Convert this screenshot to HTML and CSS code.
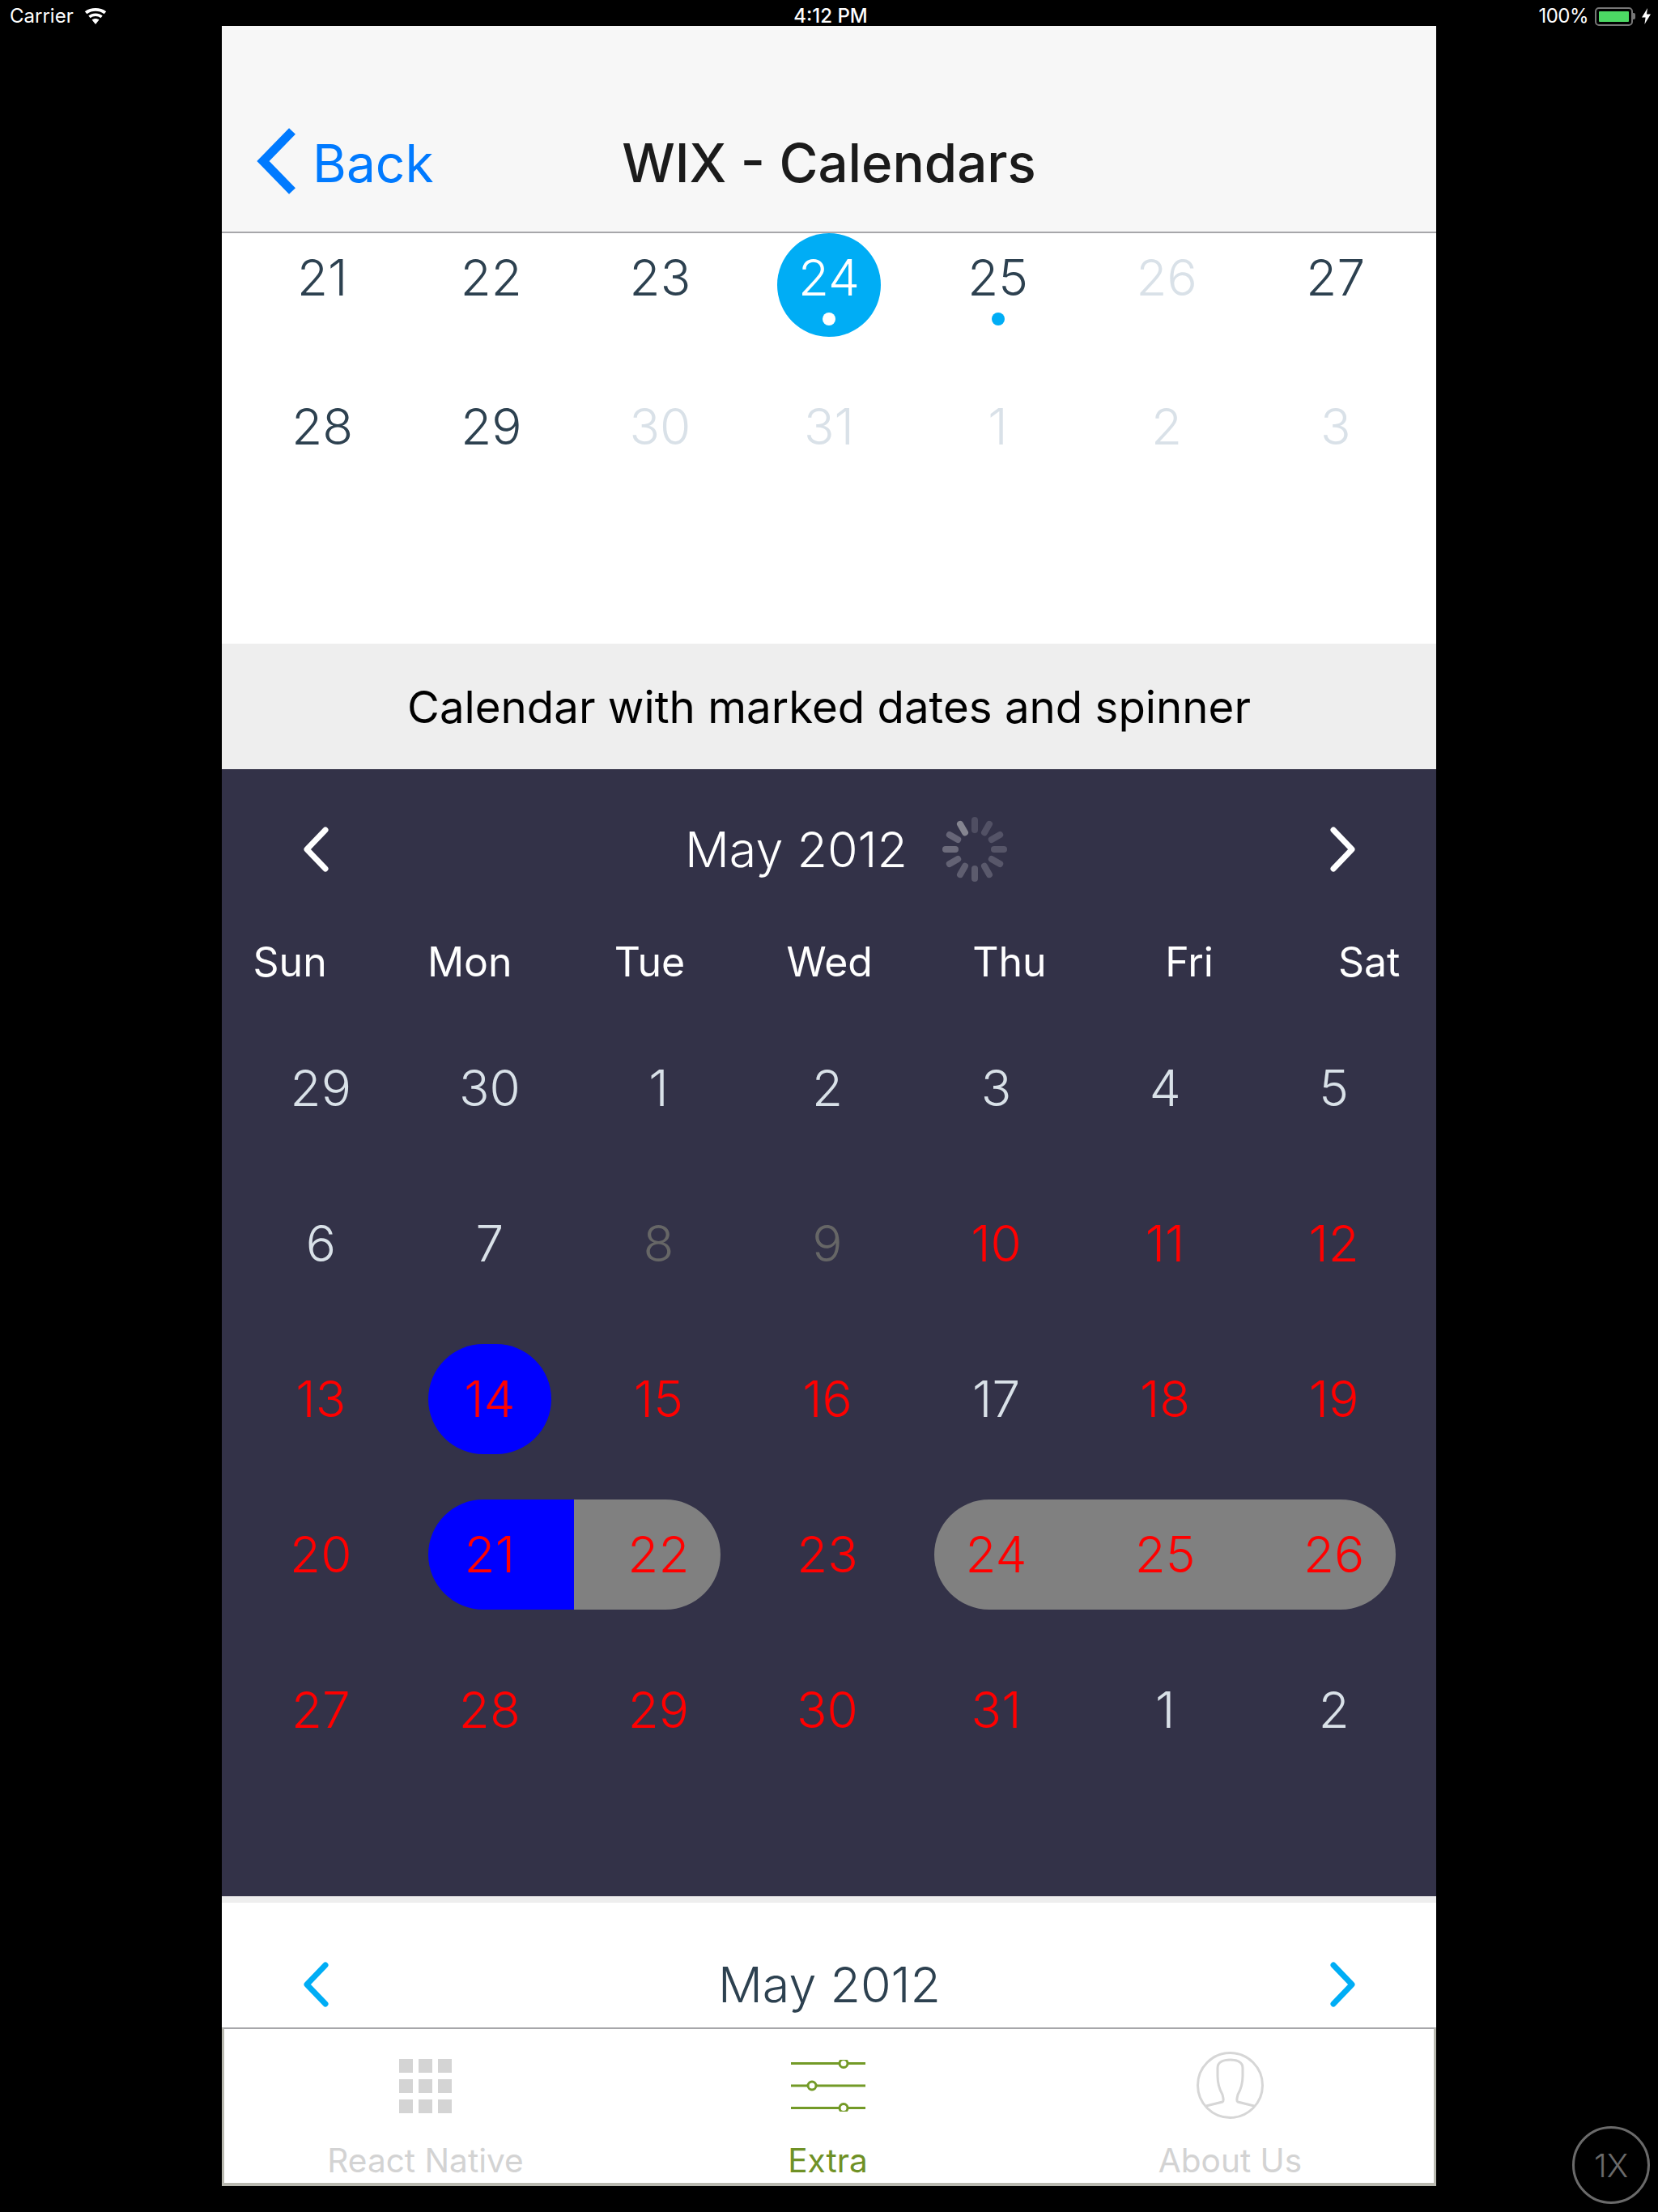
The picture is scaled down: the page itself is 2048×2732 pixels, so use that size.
FILE: index.html
```html
<!DOCTYPE html>
<html>
	<head>
		<meta charset="utf-8">
		<title>WIX - Calendars</title>
		<link rel="stylesheet" href="styles.css">
	</head>
	<body>
		<div class="statusbar">
			<div class="status-left">
				<span>Carrier</span>
				<svg class="wifi" viewBox="0 0 30 20" width="30" height="20">
					<path d="M15 20 L10.6 14.6 C13 12.6 17 12.6 19.4 14.6 Z" fill="#fff"/>
					<path d="M8.6 12.2 L6.3 9.5 C11 5.6 19 5.6 23.7 9.5 L21.4 12.2 C17.6 9.2 12.4 9.2 8.6 12.2 Z" fill="#fff"/>
					<path d="M4.4 7.2 L1.8 4.2 C9 -1.4 21 -1.4 28.2 4.2 L25.6 7.2 C19.6 2.6 10.4 2.6 4.4 7.2 Z" fill="#fff"/>
				</svg>
			</div>
			<div class="status-time">4:12 PM</div>
			<div class="status-right">
				<span>100%</span>
				<div class="battery"><div class="battery-level"></div></div>
				<div class="battery-tip"></div>
				<svg class="bolt" viewBox="0 0 13 20" width="13" height="20">
					<path d="M8 0 L1 11.5 L5.6 11.5 L4.4 20 L12 7.6 L7 7.6 Z" fill="#fff"/>
				</svg>
			</div>
		</div>

		<div class="app">
			<div class="navbar">
				<div class="nav-back">
					<svg viewBox="0 0 52 84" width="52" height="84">
						<path d="M46 5 L10 42 L46 79" fill="none" stroke="#007aff" stroke-width="11"/>
					</svg>
					<span>Back</span>
				</div>
				<div class="nav-title">WIX - Calendars</div>
			</div>

			<div class="calendar-top">
				<div class="week week-top">
					<div class="day"><span class="num">21</span></div>
					<div class="day"><span class="num">22</span></div>
					<div class="day"><span class="num">23</span></div>
					<div class="day">
						<div class="selected"><span class="num white">24</span><span class="dot dot-white"></span></div>
					</div>
					<div class="day"><span class="num">25</span><span class="dot"></span></div>
					<div class="day"><span class="num pale">26</span></div>
					<div class="day"><span class="num">27</span></div>
				</div>
				<div class="week week-top">
					<div class="day"><span class="num">28</span></div>
					<div class="day"><span class="num">29</span></div>
					<div class="day"><span class="num pale">30</span></div>
					<div class="day"><span class="num pale">31</span></div>
					<div class="day"><span class="num pale">1</span></div>
					<div class="day"><span class="num pale">2</span></div>
					<div class="day"><span class="num pale">3</span></div>
				</div>
			</div>

			<div class="section-title">Calendar with marked dates and spinner</div>

			<div class="calendar-dark">
				<div class="month-header">
					<svg class="arrow" viewBox="0 0 36 56" width="36" height="56">
						<path d="M30 4 L7 28 L30 52" fill="none" stroke="#fff" stroke-width="7" stroke-linecap="round" stroke-linejoin="round"/>
					</svg>
					<div class="month-mid">
						<span class="month-name">May 2012</span>
						<svg class="spinner" viewBox="-41 -41 82 82" width="82" height="82">
							<g stroke-width="8" stroke-linecap="round">
								<line x1="0" y1="-36" x2="0" y2="-24" stroke="#4f4e62"/>
								<line x1="0" y1="-36" x2="0" y2="-24" stroke="#525165" transform="rotate(30)"/>
								<line x1="0" y1="-36" x2="0" y2="-24" stroke="#545367" transform="rotate(60)"/>
								<line x1="0" y1="-36" x2="0" y2="-24" stroke="#565568" transform="rotate(90)"/>
								<line x1="0" y1="-36" x2="0" y2="-24" stroke="#58576a" transform="rotate(120)"/>
								<line x1="0" y1="-36" x2="0" y2="-24" stroke="#5a596c" transform="rotate(150)"/>
								<line x1="0" y1="-36" x2="0" y2="-24" stroke="#5c5b6d" transform="rotate(180)"/>
								<line x1="0" y1="-36" x2="0" y2="-24" stroke="#5f5e70" transform="rotate(210)"/>
								<line x1="0" y1="-36" x2="0" y2="-24" stroke="#636274" transform="rotate(240)"/>
								<line x1="0" y1="-36" x2="0" y2="-24" stroke="#6c6b7b" transform="rotate(270)"/>
								<line x1="0" y1="-36" x2="0" y2="-24" stroke="#666577" transform="rotate(300)"/>
								<line x1="0" y1="-36" x2="0" y2="-24" stroke="#858590" transform="rotate(330)"/>
							</g>
						</svg>
					</div>
					<svg class="arrow" viewBox="0 0 36 56" width="36" height="56">
						<path d="M6 4 L29 28 L6 52" fill="none" stroke="#fff" stroke-width="7" stroke-linecap="round" stroke-linejoin="round"/>
					</svg>
				</div>

				<div class="weekdays">
					<span>Sun</span><span>Mon</span><span>Tue</span><span>Wed</span><span>Thu</span><span>Fri</span><span>Sat</span>
				</div>

				<div class="week week-dark">
					<div class="day"><span class="num light">29</span></div>
					<div class="day"><span class="num light">30</span></div>
					<div class="day"><span class="num light">1</span></div>
					<div class="day"><span class="num light">2</span></div>
					<div class="day"><span class="num light">3</span></div>
					<div class="day"><span class="num light">4</span></div>
					<div class="day"><span class="num light">5</span></div>
				</div>
				<div class="week week-dark">
					<div class="day"><span class="num light">6</span></div>
					<div class="day"><span class="num light">7</span></div>
					<div class="day"><span class="num dim">8</span></div>
					<div class="day"><span class="num dim">9</span></div>
					<div class="day"><span class="num red">10</span></div>
					<div class="day"><span class="num red">11</span></div>
					<div class="day"><span class="num red">12</span></div>
				</div>
				<div class="week week-dark">
					<div class="day"><span class="num red">13</span></div>
					<div class="day"><div class="fill fill-one blue"><span class="num red">14</span></div></div>
					<div class="day"><span class="num red">15</span></div>
					<div class="day"><span class="num red">16</span></div>
					<div class="day"><span class="num light">17</span></div>
					<div class="day"><span class="num red">18</span></div>
					<div class="day"><span class="num red">19</span></div>
				</div>
				<div class="week week-dark">
					<div class="day"><span class="num red">20</span></div>
					<div class="day"><div class="fill fill-start blue"><span class="num red">21</span></div></div>
					<div class="day"><div class="fill fill-end gray"><span class="num red">22</span></div></div>
					<div class="day"><span class="num red">23</span></div>
					<div class="day"><div class="fill fill-start gray"><span class="num red">24</span></div></div>
					<div class="day"><div class="fill gray"><span class="num red">25</span></div></div>
					<div class="day"><div class="fill fill-end gray"><span class="num red">26</span></div></div>
				</div>
				<div class="week week-dark">
					<div class="day"><span class="num red">27</span></div>
					<div class="day"><span class="num red">28</span></div>
					<div class="day"><span class="num red">29</span></div>
					<div class="day"><span class="num red">30</span></div>
					<div class="day"><span class="num red">31</span></div>
					<div class="day"><span class="num light">1</span></div>
					<div class="day"><span class="num light">2</span></div>
				</div>
			</div>

			<div class="calendar-bottom">
				<div class="month-header month-header-light">
					<svg class="arrow" viewBox="0 0 36 56" width="36" height="56">
						<path d="M30 4 L7 28 L30 52" fill="none" stroke="#00adf5" stroke-width="7" stroke-linecap="round" stroke-linejoin="round"/>
					</svg>
					<span class="month-name">May 2012</span>
					<svg class="arrow" viewBox="0 0 36 56" width="36" height="56">
						<path d="M6 4 L29 28 L6 52" fill="none" stroke="#00adf5" stroke-width="7" stroke-linecap="round" stroke-linejoin="round"/>
					</svg>
				</div>
			</div>

			<div class="tabbar">
				<div class="tab">
					<div class="tab-icon">
						<div class="grid-icon">
							<i></i><i></i><i></i><i></i><i></i><i></i><i></i><i></i><i></i>
						</div>
					</div>
					<span>React Native</span>
				</div>
				<div class="tab tab-active">
					<div class="tab-icon">
						<svg viewBox="0 0 92 64" width="92" height="64">
							<g fill="none" stroke="#739a27" stroke-width="3">
								<path d="M0 4.5 H60 M70 4.5 H92 M0 32 H21 M31 32 H92 M0 59.5 H60 M70 59.5 H92"/>
								<circle cx="65" cy="4.5" r="5"/>
								<circle cx="26" cy="32" r="5"/>
								<circle cx="65" cy="59.5" r="5"/>
							</g>
						</svg>
					</div>
					<span>Extra</span>
				</div>
				<div class="tab">
					<div class="tab-icon">
						<svg viewBox="0 0 84 84" width="84" height="84">
							<g fill="none" stroke="#d6d6d6" stroke-width="3">
								<circle cx="41.5" cy="41.5" r="40"/>
								<path d="M12 67 L32 62 C34 61 33 57 32 53 C28 46 26 40 26 30 L26 20 C26 13 33 10 41.5 10 C50 10 57 13 57 20 L57 30 C57 40 55 46 51 53 C50 57 49 61 51 62 L71 67"/>
							</g>
						</svg>
					</div>
					<span>About Us</span>
				</div>
			</div>
		</div>

		<div class="scale-btn">1X</div>
	</body>
</html>
```

FILE: styles.css
```css
html, body {
	margin: 0;
	padding: 0;
}

body {
	position: relative;
	width: 2048px;
	height: 2732px;
	background-color: #000;
	font-family: "Inter", "Liberation Sans", sans-serif;
	overflow: hidden;
}

/* status bar */
.statusbar {
	display: grid;
	grid-template-columns: 1fr auto 1fr;
	align-items: center;
	height: 32px;
	padding: 8px 8px 0 12px;
	box-sizing: border-box;
	color: #fff;
	font-size: 24px;
	line-height: 24px;
}

.status-left {
	display: flex;
	align-items: center;
	gap: 12px;
}

.status-time {
	font-weight: 500;
}

.status-right {
	display: flex;
	align-items: center;
	justify-content: flex-end;
	letter-spacing: -0.5px;
}

.battery {
	width: 47px;
	height: 23px;
	margin-left: 8px;
	padding: 3px;
	box-sizing: border-box;
	border: 2px solid #777;
	border-radius: 5px;
}

.battery-level {
	height: 100%;
	background-color: #4cd964;
	border-radius: 1px;
}

.battery-tip {
	width: 3px;
	height: 8px;
	background-color: #777;
	border-radius: 0 2px 2px 0;
}

.bolt {
	margin-left: 7px;
}

/* app frame */
.app {
	width: 1500px;
	height: 2668px;
	margin-left: 274px;
	background-color: #fff;
	display: flex;
	flex-direction: column;
}

.navbar {
	display: grid;
	grid-template-columns: 1fr auto 1fr;
	align-items: center;
	height: 256px;
	box-sizing: border-box;
	background-color: #f7f7f7;
	border-bottom: 2px solid #a7a7aa;
	padding: 0 41px 45px 41px;
	align-content: end;
	font-size: 64px;
}

.nav-back {
	display: flex;
	align-items: center;
	gap: 19px;
	color: #007aff;
}

.nav-back svg {
	margin-top: -5px;
}

.nav-title {
	color: #1b1b1b;
	font-size: 65.4px;
	font-weight: 500;
}

/* day grid */
.week {
	display: grid;
	grid-template-columns: repeat(7, 1fr);
	padding: 0 22px 0 18px;
}

.day {
	display: flex;
	flex-direction: column;
	align-items: stretch;
	justify-content: center;
	text-align: center;
	min-width: 0;
}

.num {
	display: block;
	font-size: 62px;
	line-height: 74px;
	font-weight: 300;
	color: #2d4150;
}

.pale { color: #d9e1e8; }
.white { color: #fff; }
.light { color: #d9e1e8; }
.dim { color: #666; }
.red { color: #f00; }

.calendar-top {
	height: 507px;
	overflow: hidden;
}

.week-top {
	height: 128px;
	margin-bottom: 56px;
	padding: 0 20px;
}

.week-top .day {
	justify-content: flex-start;
	align-items: center;
	padding-top: 18px;
}

.selected {
	width: 128px;
	height: 128px;
	margin-top: -18px;
	padding-top: 18px;
	box-sizing: border-box;
	border-radius: 50%;
	background-color: #00adf5;
	display: flex;
	flex-direction: column;
	align-items: center;
}

.dot {
	display: block;
	width: 16px;
	height: 16px;
	border-radius: 50%;
	background-color: #00adf5;
	margin-top: 6px;
}

.dot-white {
	background-color: #fff;
}

.section-title {
	height: 155px;
	background-color: #eee;
	display: flex;
	align-items: center;
	justify-content: center;
	color: #000;
	font-size: 54.6px;
}

.calendar-dark {
	height: 1392px;
	background-color: #333248;
	box-sizing: border-box;
}

.month-header {
	display: flex;
	align-items: center;
	justify-content: space-between;
	height: 198px;
	padding: 0 97px 0 98px;
	color: #fff;
}

.month-mid {
	display: flex;
	align-items: center;
	margin-left: 42px;
	gap: 42px;
}

.month-name {
	font-size: 61px;
	font-weight: 300;
}

.spinner {
	flex: none;
}

.weekdays {
	display: grid;
	grid-template-columns: repeat(7, 222.2px);
	height: 100px;
	margin: -10px 0 10px -27px;
	color: #fff;
	font-size: 50px;
	text-align: center;
	align-items: center;
}

.week-dark {
	height: 192px;
}

.fill {
	height: 136px;
	display: flex;
	align-items: center;
	justify-content: center;
}

.fill .num {
	width: 100%;
}

.fill-one {
	margin: 0 28px;
	border-radius: 68px;
}

.fill-start {
	margin-left: 28px;
	padding-right: 28px;
	border-radius: 68px 0 0 68px;
}

.fill-end {
	margin-right: 28px;
	padding-left: 28px;
	border-radius: 0 68px 68px 0;
}

.blue { background-color: #00f; }
.gray { background-color: #808080; }

.calendar-bottom {
	flex: 1;
	min-height: 0;
	overflow: hidden;
	border-top: 8px solid #eee;
	background-color: #fff;
}

.month-header-light {
	color: #2d4150;
	height: 202px;
}

/* tabs */
.tabbar {
	height: 196px;
	box-sizing: border-box;
	border: 3px solid #b9b9b0;
	border-top: 2px solid #a7a7aa;
	border-bottom-width: 4px;
	display: grid;
	grid-template-columns: repeat(3, 497px);
	background-color: #fff;
}

.tab {
	display: flex;
	flex-direction: column;
	align-items: center;
	color: #d3d3d3;
	font-size: 40.6px;
}

.tab-icon {
	height: 140px;
	margin-bottom: -2px;
	display: flex;
	align-items: center;
	justify-content: center;
}

.tab-active {
	color: #6f9126;
}

.grid-icon {
	display: grid;
	grid-template-columns: repeat(3, 17px);
	grid-auto-rows: 17px;
	gap: 8px 7px;
}

.grid-icon i {
	background-color: #d4d4d4;
}

/* simulator scale button */
.scale-btn {
	position: absolute;
	left: 1942px;
	top: 2626px;
	width: 96px;
	height: 96px;
	box-sizing: border-box;
	border: 3px solid #6a6a6a;
	border-radius: 50%;
	display: flex;
	align-items: center;
	justify-content: center;
	color: #6a6a6a;
	font-size: 40px;
	font-weight: 300;
}
```
